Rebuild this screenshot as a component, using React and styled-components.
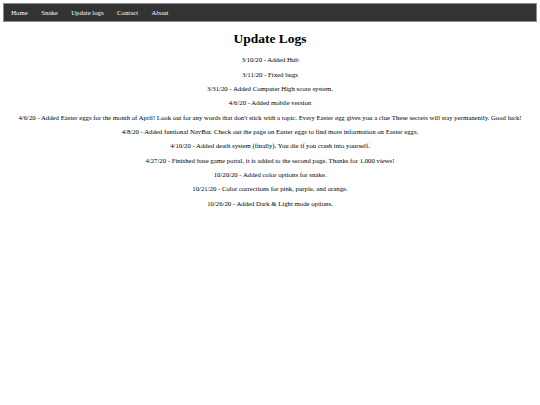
import styled, { createGlobalStyle } from "styled-components";

const GlobalStyle = createGlobalStyle`
  body {
    margin: 3.4px;
    background: #ffffff;
    font-family: "Liberation Serif", "Times New Roman", serif;
    font-size: 6.75px;
    color: #000000;
  }
`;

const links = ["Home", "Snake", "Update logs", "Contact", "About"];

const logs = [
  "3/10/20 - Added Hub",
  "3/11/20 - Fixed bugs",
  "3/31/20 - Added Computer High score system.",
  "4/6/20 - Added mobile version",
  "4/6/20 - Added Easter eggs for the month of April! Look out for any words that don't stick with a topic. Every Easter egg gives you a clue These secrets will stay permanently. Good luck!",
  "4/8/20 - Added funtional NavBar. Check out the page on Easter eggs to find more information on Easter eggs.",
  "4/10/20 - Added death system (finally). You die if you crash into yourself.",
  "4/27/20 - Finished base game portal, it is added to the second page. Thanks for 1,000 views!",
  "10/20/20 - Added color options for snake.",
  "10/21/20 - Color corrections for pink, purple, and orange.",
  "10/26/20 - Added Dark & Light mode options.",
];

export default function App() {
  return (
    <>
      <GlobalStyle />
      <NavBar>
        {links.map((l) => (
          <li key={l}>
            <NavLink href="#">{l}</NavLink>
          </li>
        ))}
      </NavBar>
      <Title>Update Logs</Title>
      {logs.map((entry, i) => (
        <LogEntry key={i}>{entry}</LogEntry>
      ))}
    </>
  );
}

const NavBar = styled.ul`
  list-style-type: none;
  display: flex;
  margin: 0;
  padding: 0;
  background-color: #333333;
  border: 1px solid #8c8c8c;
`;

const NavLink = styled.a`
  display: block;
  color: #ffffff;
  text-align: center;
  padding: 5px 6.75px;
  text-decoration: none;
  font-size: 6.75px;
  line-height: 7px;
`;

const Title = styled.h1`
  text-align: center;
  font-size: 13.5px;
  font-weight: bold;
  margin: 9px 0;
`;

const LogEntry = styled.p`
  text-align: center;
  margin: 6.75px 0;
  line-height: 7.6px;
`;
